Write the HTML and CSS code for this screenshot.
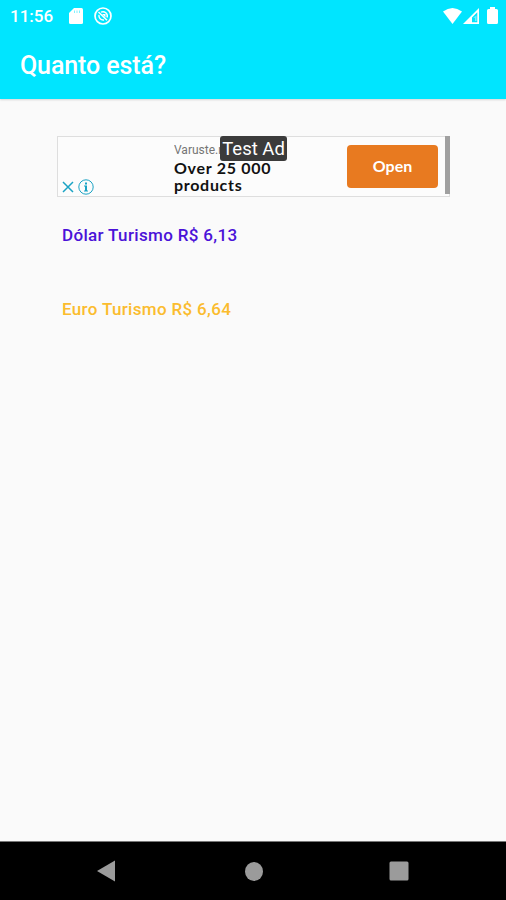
FILE: index.html
```html
<!DOCTYPE html>
<html lang="pt-BR">
<head>
  <meta charset="UTF-8">
  <meta name="viewport" content="width=device-width, initial-scale=1.0">
  <title>Quanto está?</title>
  <link rel="stylesheet" href="styles.css">
</head>
<body>
  <div class="screen">
    <header class="top">
      <div class="status-bar">
        <span class="clock">11:56</span>
        <svg class="icon-sd" width="14" height="16" viewBox="0 0 14 16">
          <path fill="#fff" d="M5 0h7.500q1.500 0 1.500 1.500v13q0 1.500-1.500 1.500h-11q-1.500 0-1.500-1.500V5z"/>
          <path stroke="#00e5ff" stroke-opacity=".5" d="M5.500 2.500v2.500M8 2.500v2.500M10.500 2.500v2.500"/>
        </svg>
        <svg class="icon-sync" width="18" height="18" viewBox="0 0 18 18" fill="none" stroke="#fff">
          <circle cx="9" cy="9" r="8" stroke-width="1.700"/>
          <path stroke-width="1.500" d="M4.500 5l8.500 8.300M7 5.200a4.300 4.300 0 0 1 6 5.300M5 8a4.300 4.300 0 0 0 5 5"/>
          <path fill="#fff" stroke="none" d="M8 7h3.500v3.500z"/>
        </svg>
        <div class="signals">
          <svg width="19" height="16" viewBox="0 0 19 16">
            <path fill="#fff" d="M0 3.500Q9.500-3.500 19 3.500L9.500 16z"/>
          </svg>
          <svg class="icon-cell" width="16" height="16" viewBox="0 0 16 16">
            <path fill="#fff" fill-rule="evenodd" d="M16 0v16H0zM14.300 4.200L9 9.500V14.300h5.300z"/>
            <path fill="#fff" d="M10.500 9.500l3-2v5.500h-1.500V9.800h-1.500z" opacity=".45"/>
          </svg>
          <svg class="icon-battery" width="11" height="17" viewBox="0 0 11 17">
            <path fill="#fff" d="M3 0h5v2h1.500q1.500 0 1.500 1.500v12q0 1.500-1.500 1.500h-8q-1.500 0-1.500-1.500v-12q0-1.500 1.500-1.500h1.500z"/>
          </svg>
        </div>
      </div>
      <h1 class="title">Quanto está?</h1>
    </header>

    <main class="content">
      <div class="ad">
        <div class="ad-choices">
          <svg width="12" height="12" viewBox="0 0 12 12">
            <path stroke="#1ba3c4" stroke-width="1.500" d="M1 1l10 10M11 1L1 11"/>
          </svg>
          <svg width="16" height="16" viewBox="0 0 16 16">
            <circle cx="8" cy="8" r="7.200" fill="none" stroke="#1ba3c4"/>
            <path fill="#1ba3c4" d="M7 3.500h2v2H7zM6 6.500h3v5h1v1H6v-1h1v-4H6z"/>
          </svg>
        </div>
        <div class="ad-text">
          <span class="ad-brand">Varuste.n</span>
          <span class="ad-headline">Over 25 000<br>products</span>
        </div>
        <a class="ad-button">Open</a>
        <span class="ad-label">Test Ad</span>
        <span class="ad-edge"></span>
      </div>

      <p class="rate dolar">Dólar Turismo R$ 6,13</p>
      <p class="rate euro">Euro Turismo R$ 6,64</p>
    </main>

    <nav class="nav-bar">
      <svg width="18" height="22" viewBox="0 0 18 22"><path fill="#9b9b9b" d="M18 .5v21L0 11z"/></svg>
      <svg class="icon-home" width="18" height="19" viewBox="0 0 18 19"><ellipse cx="9" cy="9.500" rx="9" ry="9.500" fill="#9b9b9b"/></svg>
      <svg width="20" height="20" viewBox="0 0 20 20"><rect x=".5" y=".5" width="19" height="19" rx="1.500" fill="#9b9b9b"/></svg>
    </nav>
  </div>
</body>
</html>
```

FILE: styles.css
```css
body {
  margin: 0;
  font-family: Roboto, "Liberation Sans", sans-serif;
}
.screen {
  display: flex;
  flex-direction: column;
  height: 900px;
  background: #fafafa;
}

.top {
  box-sizing: border-box;
  height: 99px;
  background: #00e5ff;
  color: #fff;
  box-shadow: 0 1px 2px rgba(0, 0, 0, 0.15);
}
.status-bar {
  display: flex;
  align-items: center;
  height: 31px;
  padding: 0 8px 0 10px;
}
.clock {
  width: 43px;
  font-size: 17px;
  font-weight: 500;
  line-height: 32px;
  white-space: nowrap;
}
.icon-sd {
  margin-left: 16px;
}
.icon-sync {
  margin-left: 11px;
}
.signals {
  display: flex;
  align-items: center;
  margin-left: auto;
}
.icon-cell {
  margin-left: 1px;
}
.icon-battery {
  margin-left: 8px;
}
.title {
  margin: 17px 0 0 20px;
  font-size: 25px;
  font-weight: 500;
  line-height: 35px;
  letter-spacing: -0.1px;
}

.content {
  flex: 1;
  padding: 37px 56px 0 57px;
}
.ad {
  position: relative;
  display: flex;
  box-sizing: border-box;
  height: 61px;
  border: 1px solid #dedede;
  background: #fcfcfc;
}
.ad-choices {
  display: flex;
  align-items: center;
  align-self: flex-end;
  gap: 4px;
  width: 112px;
  padding: 0 0 1px 4px;
}
.ad-text {
  display: flex;
  flex-direction: column;
  align-items: flex-start;
  width: 173px;
  padding-top: 5px;
}
.ad-brand {
  width: 46px;
  overflow: hidden;
  color: #757575;
  font-size: 12px;
  line-height: 17px;
}
.ad-headline {
  color: #111;
  font-family: Lato, sans-serif;
  font-size: 16px;
  font-weight: 700;
  line-height: 17px;
  letter-spacing: 0.7px;
}
.ad-button {
  height: 43px;
  margin-top: 8px;
  width: 91px;
  border-radius: 4px;
  background: #e87a20;
  color: #fff;
  font-family: Lato, sans-serif;
  font-size: 16px;
  font-weight: 700;
  line-height: 42px;
  text-align: center;
}
/* overlay put on top of test banners */
.ad-label {
  position: absolute;
  top: -1px;
  left: 162px;
  width: 67px;
  height: 25px;
  border-radius: 3px;
  background: #3b3b3b;
  color: #fff;
  font-size: 18.5px;
  line-height: 26px;
  text-align: center;
  white-space: nowrap;
}
.ad-edge {
  position: absolute;
  top: -1px;
  right: -1px;
  width: 5px;
  height: 58px;
  background: #a0a0a0;
}

.rate {
  margin: 0;
  padding-left: 5px;
  font-size: 17px;
  font-weight: 500;
  line-height: 22px;
  letter-spacing: 0.34px;
}
.dolar {
  margin-top: 27px;
  color: #4a12d8;
}
.euro {
  margin-top: 52px;
  color: #fbbc2e;
}

.nav-bar {
  display: flex;
  align-items: center;
  justify-content: space-between;
  box-sizing: border-box;
  height: 59px;
  padding: 0 97px;
  border-top: 1px solid #777;
  background: #000;
}
.icon-home {
  margin-left: 3px;
}
```
